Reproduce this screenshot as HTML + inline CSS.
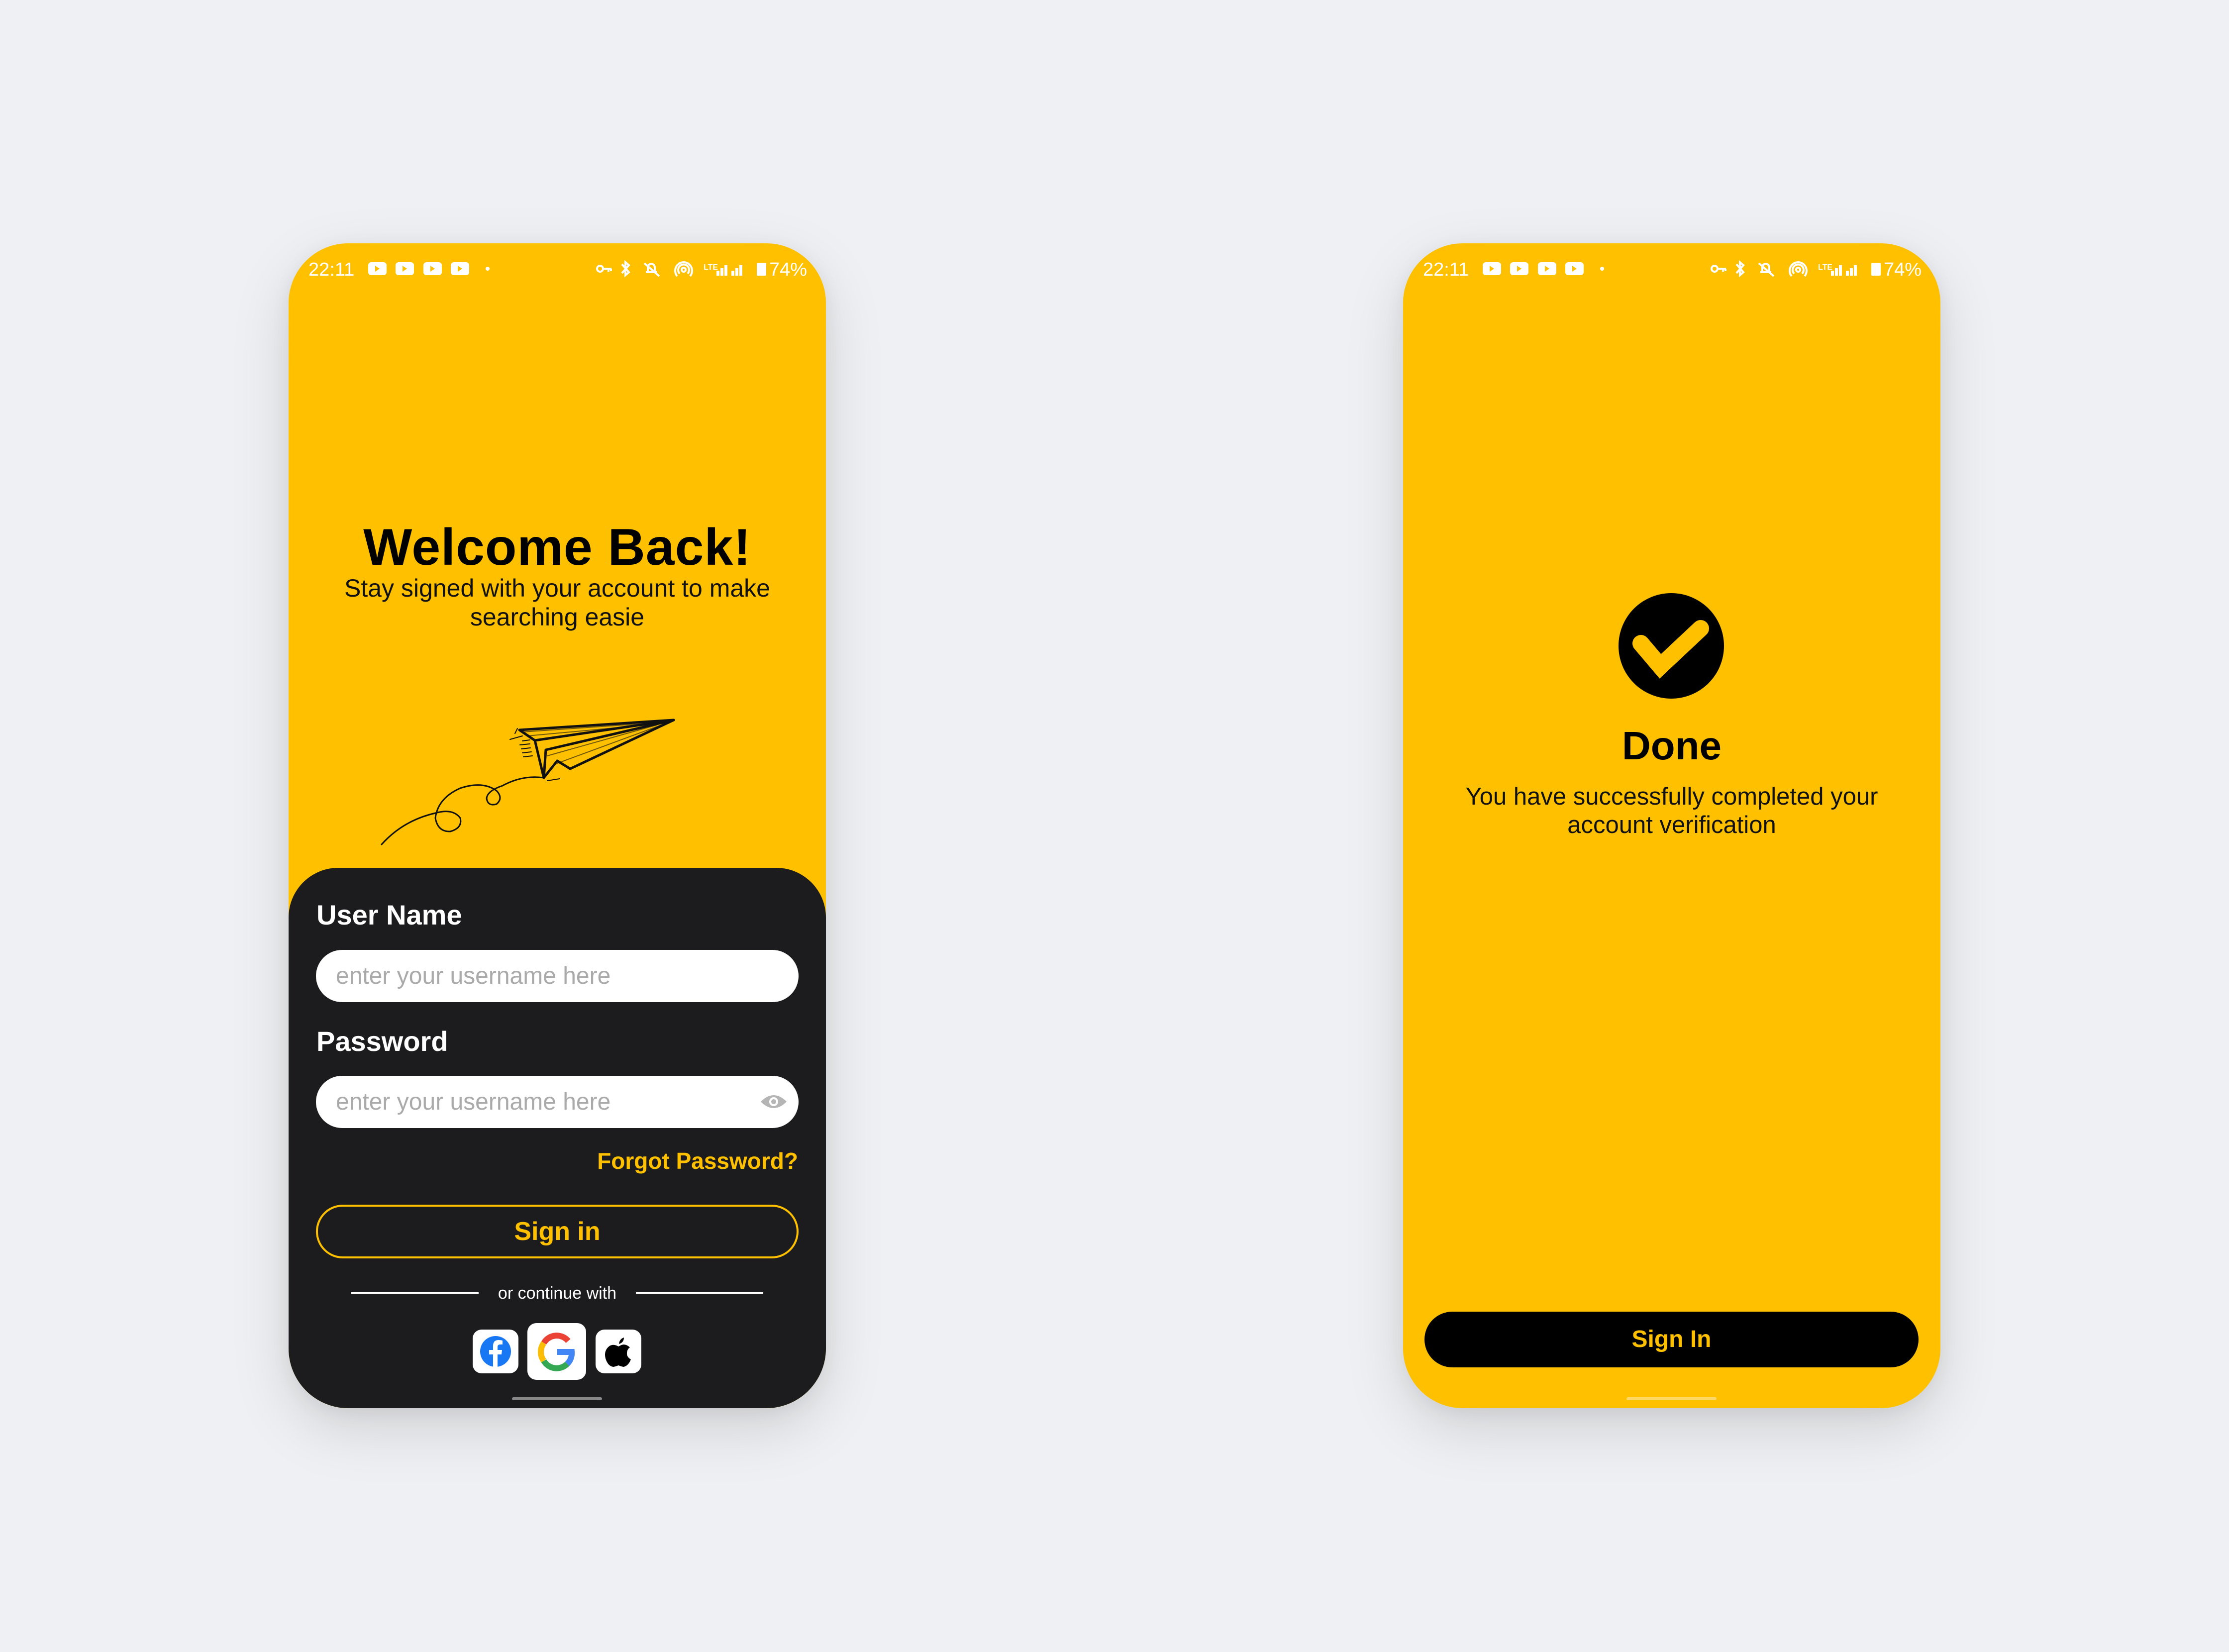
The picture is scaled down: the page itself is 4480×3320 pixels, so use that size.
<!DOCTYPE html>
<html><head><meta charset="utf-8">
<style>
html,body{margin:0;padding:0}
body{width:4480px;height:3320px;background:#eff0f3;position:relative;overflow:hidden;font-family:"Liberation Sans",sans-serif}
.phone{position:absolute;top:489px;width:1080px;height:2341px;border-radius:120px;background:#ffc000;overflow:hidden;box-shadow:0 40px 120px rgba(0,0,0,0.13),0 10px 40px rgba(0,0,0,0.06)}
.abs{position:absolute}
.c{left:0;width:1080px;text-align:center}
.panel{left:0;top:1255px;width:1080px;height:1086px;background:#1c1c1e;border-radius:100px 100px 0 0}
.lbl{left:56px;color:#fff;font-weight:bold;font-size:56px;line-height:56px}
.inp{left:55px;width:970px;height:105px;border-radius:53px;background:#fff;color:#aaa;font-size:48px;line-height:105px;box-sizing:border-box;padding-left:40px}
.soc{background:#fff;border-radius:18px}
</style></head><body>

<!-- PHONE 1 -->
<div class="phone" style="left:580px">
  <svg class="abs" style="left:0;top:0" width="1080" height="100">
    <g fill="#fff">
      <text x="40" y="65" font-size="38" font-family="Liberation Sans">22:11</text>
      <rect x="160" y="38" width="37" height="26" rx="6"/><rect x="215" y="38" width="37" height="26" rx="6"/><rect x="271" y="38" width="37" height="26" rx="6"/><rect x="326" y="38" width="37" height="26" rx="6"/>
      <circle cx="400" cy="51" r="4"/>
      <rect x="941" y="39" width="19" height="26" rx="2"/>
      <text x="966" y="65" font-size="38" font-family="Liberation Sans">74%</text>
      <rect x="860" y="55" width="6" height="10"/><rect x="868" y="50" width="6" height="15"/><rect x="876" y="44" width="6" height="21"/>
      <rect x="890" y="55" width="6" height="10"/><rect x="898" y="50" width="6" height="15"/><rect x="906" y="44" width="6" height="21"/>
      <text x="834" y="53" font-size="16" font-weight="bold" font-family="Liberation Sans">LTE</text>
    </g>
    <g fill="#ffc000"><path d="M174 45 L183 51 L174 57Z"/><path d="M229 45 L238 51 L229 57Z"/><path d="M285 45 L294 51 L285 57Z"/><path d="M340 45 L349 51 L340 57Z"/></g>
    <g fill="none" stroke="#fff" stroke-width="4">
      <circle cx="626" cy="51" r="6"/><path d="M632 51 H649 M643 51 V57 M648 51 V56"/>
      <path d="M670 42 L684 58 L677 64 V38 L684 44 L670 60"/>
      <path d="M718 58 H740 M722 58 V49 Q722 42 729 41 Q736 42 736 49 V58 M715 40 L745 66"/>
      <circle cx="794" cy="53" r="4"/><path d="M786 61 A11 11 0 1 1 802 61 M781 66 A17 17 0 1 1 807 66"/>
    </g>
  </svg>
  <div class="abs c" style="top:559px;font-size:104px;line-height:104px;font-weight:bold;color:#000;letter-spacing:1px">Welcome Back!</div>
  <div class="abs c" style="top:664px;font-size:50px;line-height:58px;color:#111">Stay signed with your account to make<br>searching easie</div>
  <svg class="abs" style="left:0;top:0" width="1080" height="1300" fill="none" stroke="#111" stroke-linecap="round" stroke-linejoin="round">
    <path d="M464 978 L774 958 L495 999 Z" stroke-width="5"/>
    <path d="M495 999 L513 1074 L517 1018 L774 958 L566 1056 L540 1040 L513 1074" stroke-width="5"/>
    <path d="M470 982 L760 962 M480 990 L740 966 M520 1030 L740 968 M540 1045 L760 964" stroke-width="2" opacity="0.6"/>
    <path d="M445 997 L470 990 M455 985 L460 975 M470 1000 L485 998 M465 1008 L485 1006 M468 1016 L486 1014 M470 1024 L488 1022 M472 1032 L490 1030 M520 1080 L545 1076" stroke-width="2"/>
    <path d="M513 1074 Q470 1068 430 1090 Q400 1100 398 1115 Q400 1132 418 1127 Q432 1115 418 1100 Q390 1080 345 1095 Q300 1115 295 1155 Q300 1183 325 1182 Q350 1175 345 1155 Q330 1135 295 1145 Q230 1160 187 1208" stroke-width="3"/>
  </svg>
  <div class="abs panel"></div>
  <div class="abs lbl" style="top:1322px">User Name</div>
  <div class="abs inp" style="top:1420px">enter your username here</div>
  <div class="abs lbl" style="top:1576px">Password</div>
  <div class="abs inp" style="top:1673px">enter your username here</div>
  <svg class="abs" style="left:947px;top:1709px" width="56" height="32"><path d="M2 16 Q28 -10 54 16 Q28 42 2 16Z" fill="#b5b5b5"/><circle cx="28" cy="16" r="9" fill="#fff"/><circle cx="28" cy="16" r="5" fill="#b5b5b5"/></svg>
  <div class="abs" style="right:56px;top:1821px;font-size:46px;line-height:46px;font-weight:bold;color:#ffc000">Forgot Password?</div>
  <div class="abs" style="left:55px;top:1932px;width:970px;height:108px;box-sizing:border-box;border:4px solid #ffc000;border-radius:54px;text-align:center;line-height:100px;font-size:52px;font-weight:bold;color:#ffc000">Sign in</div>
  <div class="abs" style="left:126px;top:2108px;width:256px;height:3px;background:#fff"></div>
  <div class="abs" style="left:698px;top:2108px;width:256px;height:3px;background:#fff"></div>
  <div class="abs c" style="top:2090px;font-size:34px;line-height:40px;color:#fff">or continue with</div>
  <div class="abs soc" style="left:370px;top:2183px;width:92px;height:88px">
    <svg width="92" height="88"><circle cx="46" cy="44" r="31" fill="#1877f2"/><path d="M50 76 V50 H58 L59 41 H50 V35 Q50 30 55 30 H60 V22 Q56 21 52 21 Q41 21 41 33 V41 H33 V50 H41 V76Z" fill="#fff"/></svg>
  </div>
  <div class="abs soc" style="left:480px;top:2170px;width:118px;height:114px">
    <svg width="118" height="114" fill="none" stroke-width="12">
      <path d="M82 36 A30 30 0 0 0 33 40" stroke="#ea4335"/>
      <path d="M33 40 A30 30 0 0 0 33 76" stroke="#fbbc05"/>
      <path d="M33 76 A30 30 0 0 0 80 82" stroke="#34a853"/>
      <path d="M80 82 A30 30 0 0 0 89 58 H60" stroke="#4285f4"/>
    </svg>
  </div>
  <div class="abs soc" style="left:617px;top:2183px;width:92px;height:88px">
    <svg width="92" height="88"><path d="M46 34 Q36 28 28 33 Q16 42 20 58 Q25 74 36 75 Q41 74 46 72 Q51 74 56 75 Q66 73 71 60 Q62 55 63 46 Q64 39 69 36 Q61 28 52 31 Z" fill="#000"/><path d="M47 29 Q48 19 57 16 Q57 26 47 29Z" fill="#000"/></svg>
  </div>
  <div class="abs" style="left:449px;top:2319px;width:181px;height:6px;border-radius:3px;background:#888"></div>
</div>

<!-- PHONE 2 -->
<div class="phone" style="left:2820px">
  <svg class="abs" style="left:0;top:0" width="1080" height="100">
    <g fill="#fff">
      <text x="40" y="65" font-size="38" font-family="Liberation Sans">22:11</text>
      <rect x="160" y="38" width="37" height="26" rx="6"/><rect x="215" y="38" width="37" height="26" rx="6"/><rect x="271" y="38" width="37" height="26" rx="6"/><rect x="326" y="38" width="37" height="26" rx="6"/>
      <circle cx="400" cy="51" r="4"/>
      <rect x="941" y="39" width="19" height="26" rx="2"/>
      <text x="966" y="65" font-size="38" font-family="Liberation Sans">74%</text>
      <rect x="860" y="55" width="6" height="10"/><rect x="868" y="50" width="6" height="15"/><rect x="876" y="44" width="6" height="21"/>
      <rect x="890" y="55" width="6" height="10"/><rect x="898" y="50" width="6" height="15"/><rect x="906" y="44" width="6" height="21"/>
      <text x="834" y="53" font-size="16" font-weight="bold" font-family="Liberation Sans">LTE</text>
    </g>
    <g fill="#ffc000"><path d="M174 45 L183 51 L174 57Z"/><path d="M229 45 L238 51 L229 57Z"/><path d="M285 45 L294 51 L285 57Z"/><path d="M340 45 L349 51 L340 57Z"/></g>
    <g fill="none" stroke="#fff" stroke-width="4">
      <circle cx="626" cy="51" r="6"/><path d="M632 51 H649 M643 51 V57 M648 51 V56"/>
      <path d="M670 42 L684 58 L677 64 V38 L684 44 L670 60"/>
      <path d="M718 58 H740 M722 58 V49 Q722 42 729 41 Q736 42 736 49 V58 M715 40 L745 66"/>
      <circle cx="794" cy="53" r="4"/><path d="M786 61 A11 11 0 1 1 802 61 M781 66 A17 17 0 1 1 807 66"/>
    </g>
  </svg>
  <svg class="abs" style="left:0;top:0" width="1080" height="1000">
    <circle cx="539" cy="809" r="106" fill="#000"/>
    <path d="M478 804 L517 850 L598 774" fill="none" stroke="#ffc000" stroke-width="34" stroke-linecap="round" stroke-linejoin="miter"/>
  </svg>
  <div class="abs c" style="top:970px;font-size:80px;line-height:80px;font-weight:bold;color:#000">Done</div>
  <div class="abs c" style="top:1084px;font-size:49px;line-height:57px;color:#111">You have successfully completed your<br>account verification</div>
  <div class="abs" style="left:43px;top:2147px;width:993px;height:112px;border-radius:56px;background:#000;text-align:center;line-height:112px;font-size:48px;font-weight:bold;color:#ffc000">Sign In</div>
  <div class="abs" style="left:449px;top:2319px;width:181px;height:6px;border-radius:3px;background:#ffd966"></div>
</div>

</body></html>
